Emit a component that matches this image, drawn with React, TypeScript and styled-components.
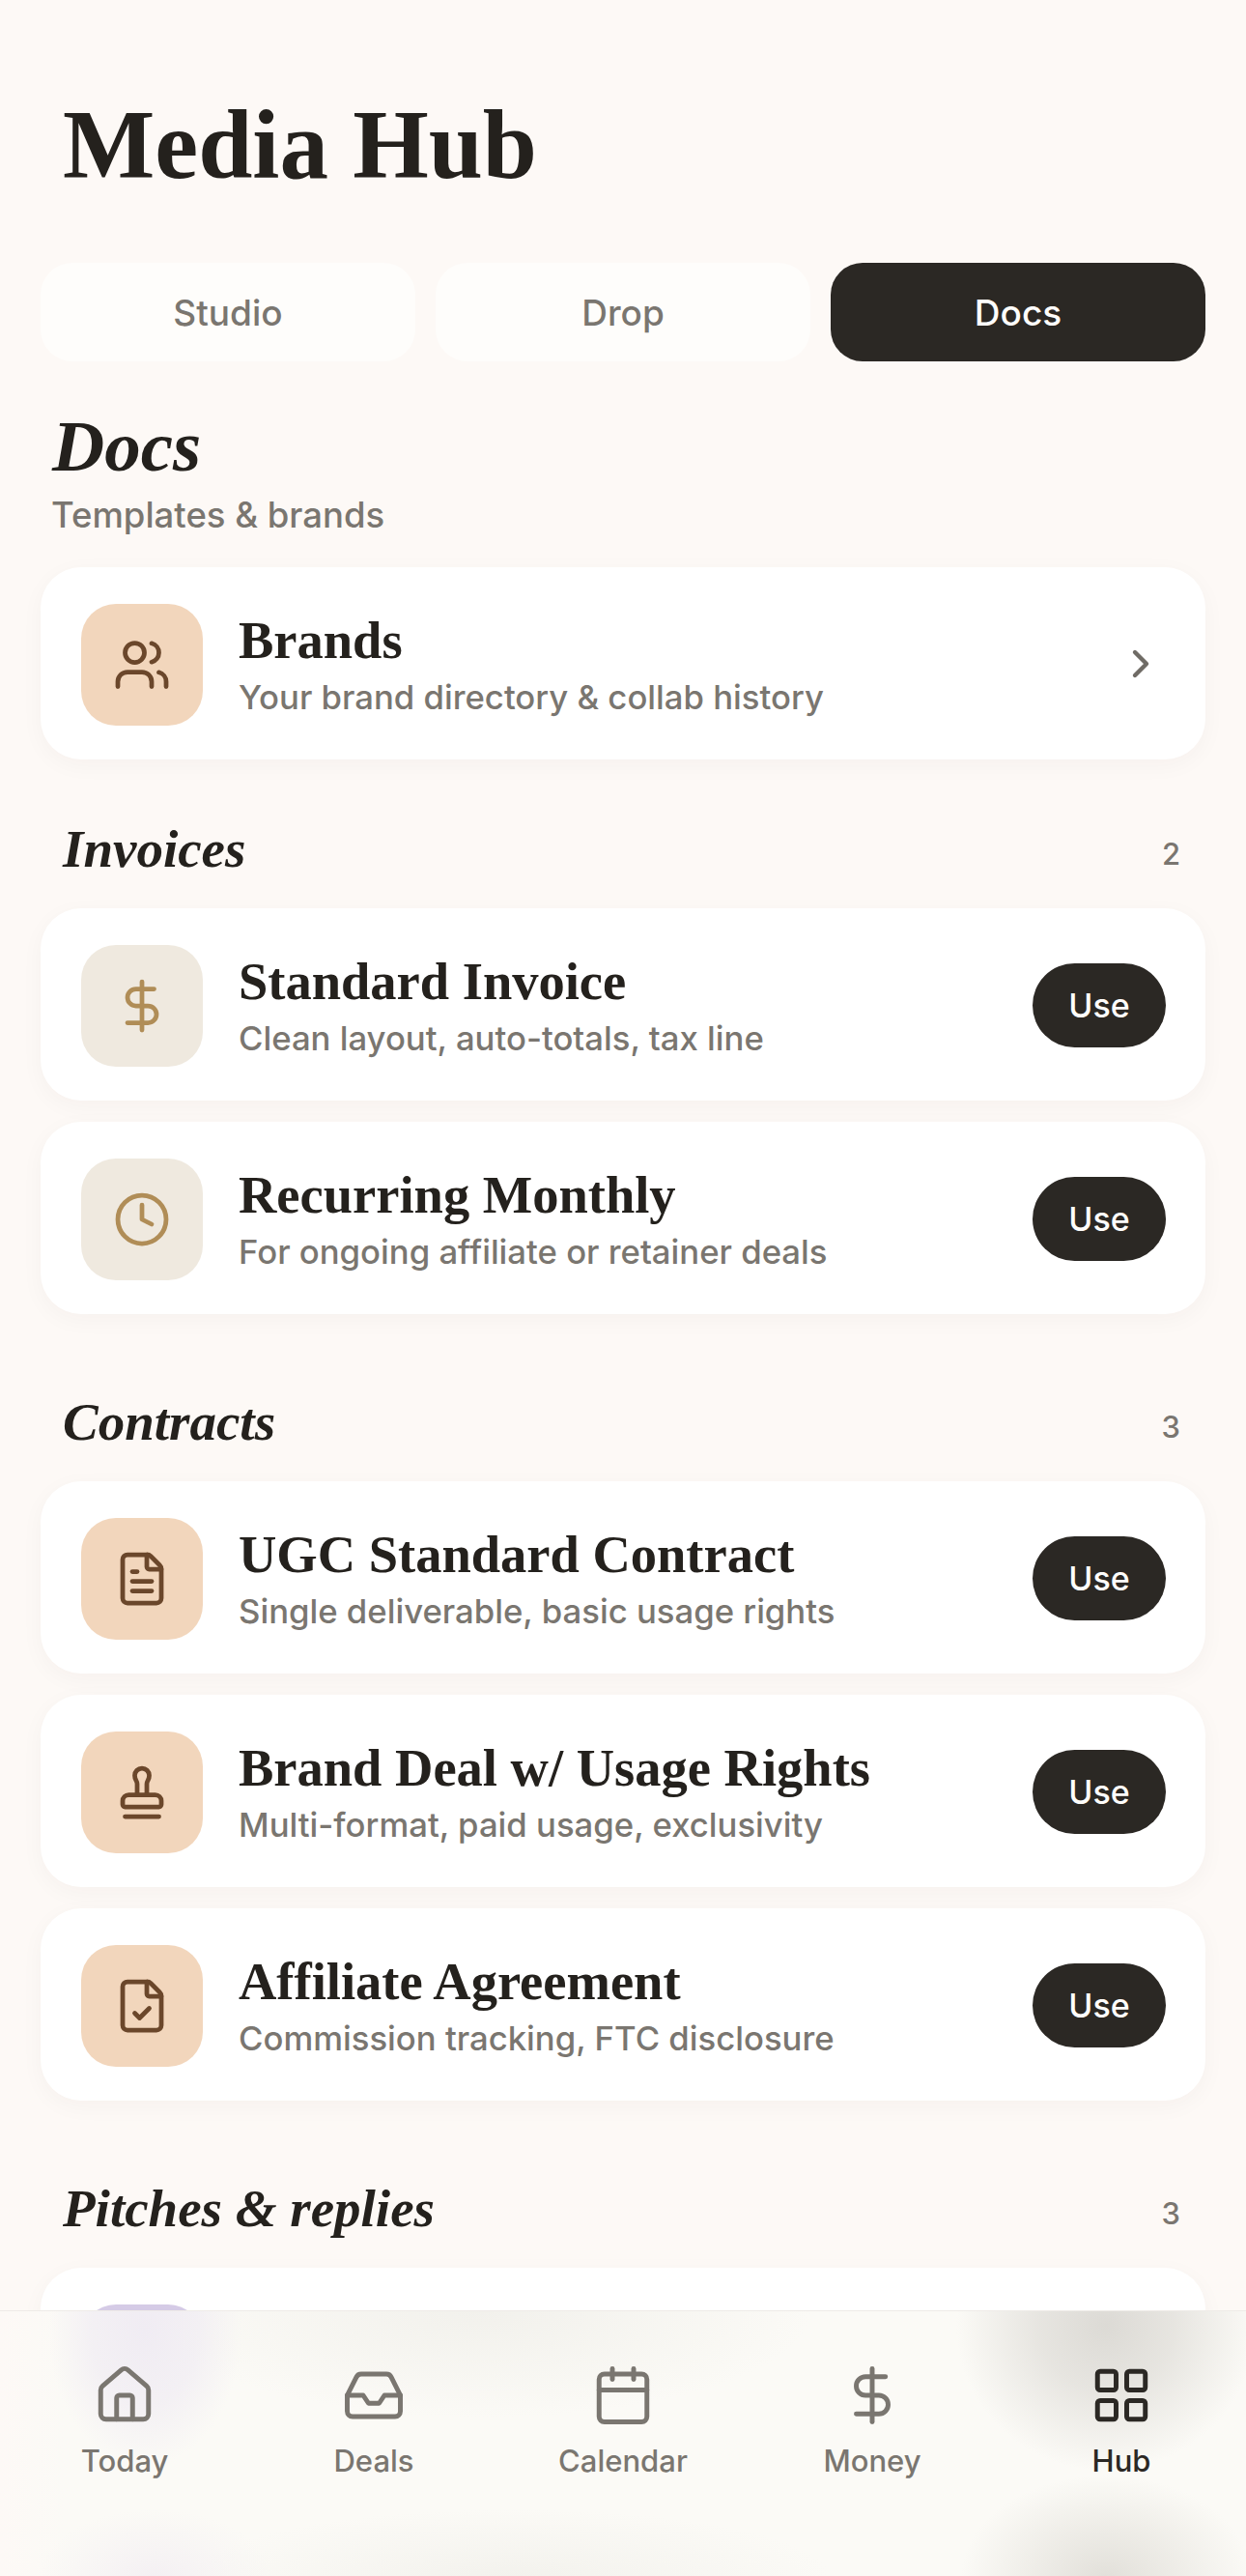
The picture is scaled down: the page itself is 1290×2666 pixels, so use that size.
import React from "react";
import styled, { createGlobalStyle } from "styled-components";
import {
  Calendar,
  ChevronRight,
  Clock,
  DollarSign,
  FileCheck,
  FileText,
  House,
  Inbox,
  LayoutGrid,
  LucideIcon,
  Stamp,
  Users,
} from "lucide-react";

const SERIF = `"Liberation Serif", "DejaVu Serif", serif`;
const SANS = `Inter, "Noto Sans", sans-serif`;

const GlobalStyle = createGlobalStyle`
  html, body {
    margin: 0;
    padding: 0;
    height: 2666px;
    overflow: hidden;
    background: #fdf9f6;
  }
  * {
    box-sizing: border-box;
  }
`;

const Screen = styled.div`
  position: relative;
  width: 1290px;
  height: 2666px;
  overflow: hidden;
  background: #fdf9f6;
  font-family: ${SANS};
  color: #24211d;
`;

const Content = styled.main`
  padding: 92px 42px 0;
`;

const PageTitle = styled.h1`
  margin: 0 0 0 23px;
  height: 116px;
  font-family: ${SERIF};
  font-size: 101px;
  line-height: 116px;
  font-weight: 700;
`;

const Tabs = styled.div`
  display: grid;
  grid-template-columns: repeat(3, 1fr);
  gap: 21px;
  margin-top: 64px;
`;

const Tab = styled.button<{ $active?: boolean }>`
  height: 102px;
  border: 0;
  border-radius: 33px;
  padding: 0;
  background: ${(p) => (p.$active ? "#2b2824" : "#fefdfb")};
  color: ${(p) => (p.$active ? "#fefdfb" : "#7a7670")};
  font-family: ${SANS};
  font-size: 37px;
  font-weight: 500;
`;

const PanelTitle = styled.h2`
  margin: 52px 0 0 12px;
  height: 72px;
  font-family: ${SERIF};
  font-style: italic;
  font-size: 75px;
  line-height: 72px;
  font-weight: 700;
`;

const PanelSubtitle = styled.div`
  margin: 15px 0 0 11px;
  height: 40px;
  font-size: 36.5px;
  line-height: 40px;
  font-weight: 500;
  color: #7a7670;
`;

const CardList = styled.div`
  display: flex;
  flex-direction: column;
  gap: 22px;
`;

const BrandsList = styled(CardList)`
  margin-top: 34px;
`;

const Card = styled.div`
  display: flex;
  align-items: center;
  height: 199px;
  padding: 0 41px 0 42px;
  border-radius: 42px;
  background: #fff;
  box-shadow: 0 6px 24px rgba(60, 40, 20, 0.035);
`;

const IconBox = styled.div<{ $bg: string; $fg: string }>`
  display: flex;
  flex: none;
  align-items: center;
  justify-content: center;
  width: 126px;
  height: 126px;
  margin-top: 2px;
  border-radius: 36px;
  background: ${(p) => p.$bg};
  color: ${(p) => p.$fg};
`;

const CardText = styled.div`
  flex: 1;
  min-width: 0;
  margin-left: 37px;
`;

const CardTitle = styled.div`
  font-family: ${SERIF};
  font-size: 54.5px;
  line-height: 60px;
  font-weight: 700;
  color: #24211d;
`;

const CardDesc = styled.div`
  margin-top: 8px;
  font-size: 34.7px;
  line-height: 40px;
  font-weight: 500;
  color: #7a7670;
`;

const UseButton = styled.button`
  flex: none;
  width: 138px;
  height: 87px;
  margin-top: 1px;
  border: 0;
  border-radius: 44px;
  padding: 0;
  background: #2b2824;
  color: #fefdfb;
  font-family: ${SANS};
  font-size: 34px;
  font-weight: 500;
`;

const Chevron = styled(ChevronRight)`
  flex: none;
  margin-right: 2px;
  color: #6f6b65;
`;

const SectionHeader = styled.div<{ $first?: boolean }>`
  display: flex;
  align-items: flex-end;
  justify-content: space-between;
  height: 62px;
  margin: ${(p) => (p.$first ? "62px" : "81px")} 0 30px;
  padding: 0 26px 0 23px;
`;

const SectionTitle = styled.h3`
  margin: 0;
  font-family: ${SERIF};
  font-style: italic;
  font-size: 55px;
  line-height: 62px;
  font-weight: 700;
`;

const SectionCount = styled.span`
  margin-bottom: 3px;
  font-size: 31px;
  line-height: 46px;
  font-weight: 500;
  color: #7a7670;
`;

/* backdrop-filter does not paint in the capture, so the blurred page behind the bar is baked in */
const BottomNav = styled.nav`
  position: absolute;
  left: 0;
  right: 0;
  bottom: 0;
  display: grid;
  grid-template-columns: repeat(5, 1fr);
  align-content: start;
  height: 275px;
  padding-top: 54px;
  border-top: 1px solid #eeebe7;
  background-color: #fbfaf6;
  background-image:
    radial-gradient(ellipse 155px 150px at 1145px 15px, #dcdad5 0%, rgba(224, 222, 217, 0.75) 45%, rgba(251, 250, 246, 0) 100%),
    radial-gradient(ellipse 150px 105px at 1145px 275px, #e2e0da 0%, rgba(230, 228, 222, 0.6) 50%, rgba(251, 250, 246, 0) 100%),
    radial-gradient(ellipse 100px 140px at 150px 20px, #f0ecf3 0%, rgba(240, 236, 243, 0.7) 55%, rgba(251, 250, 246, 0) 100%),
    radial-gradient(ellipse 120px 70px at 160px 275px, #f4f0f3 0%, rgba(251, 250, 246, 0) 100%),
    radial-gradient(ellipse 340px 110px at 500px 0, #f2f1ec 0%, rgba(251, 250, 246, 0) 100%),
    radial-gradient(ellipse 330px 70px at 530px 275px, #f3f2ed 0%, rgba(251, 250, 246, 0) 100%),
    linear-gradient(90deg, #fdf9f6 0, rgba(253, 249, 246, 0) 70px);
`;

const NavItem = styled.div<{ $active?: boolean }>`
  display: flex;
  flex-direction: column;
  align-items: center;
  gap: 16px;
  color: ${(p) => (p.$active ? "#2b2824" : "#7a7670")};
`;

const NavLabel = styled.span`
  font-size: 31px;
  line-height: 38px;
  font-weight: 500;
`;

type Doc = { title: string; desc: string; icon: LucideIcon };

const PEACH = { bg: "#f2d6bc", fg: "#6b472b" };
const SAND = { bg: "#efe9df", fg: "#b08d57" };
const LILAC = { bg: "#d5cbe6", fg: "#5b4a7a" };

const sections: { name: string; count: number; tone: typeof PEACH; docs: Doc[] }[] = [
  {
    name: "Invoices",
    count: 2,
    tone: SAND,
    docs: [
      { title: "Standard Invoice", desc: "Clean layout, auto-totals, tax line", icon: DollarSign },
      { title: "Recurring Monthly", desc: "For ongoing affiliate or retainer deals", icon: Clock },
    ],
  },
  {
    name: "Contracts",
    count: 3,
    tone: PEACH,
    docs: [
      { title: "UGC Standard Contract", desc: "Single deliverable, basic usage rights", icon: FileText },
      { title: "Brand Deal w/ Usage Rights", desc: "Multi-format, paid usage, exclusivity", icon: Stamp },
      { title: "Affiliate Agreement", desc: "Commission tracking, FTC disclosure", icon: FileCheck },
    ],
  },
];

const navItems: { label: string; icon: LucideIcon; active?: boolean }[] = [
  { label: "Today", icon: House },
  { label: "Deals", icon: Inbox },
  { label: "Calendar", icon: Calendar },
  { label: "Money", icon: DollarSign },
  { label: "Hub", icon: LayoutGrid, active: true },
];

const App = (): JSX.Element => {
  return (
    <Screen>
      <GlobalStyle />
      <Content>
        <PageTitle>Media Hub</PageTitle>
        <Tabs>
          <Tab>Studio</Tab>
          <Tab>Drop</Tab>
          <Tab $active>Docs</Tab>
        </Tabs>
        <PanelTitle>Docs</PanelTitle>
        <PanelSubtitle>Templates &amp; brands</PanelSubtitle>
        <BrandsList>
          <Card>
            <IconBox $bg={PEACH.bg} $fg={PEACH.fg}>
              <Users size={60} strokeWidth={1.9} />
            </IconBox>
            <CardText>
              <CardTitle>Brands</CardTitle>
              <CardDesc>Your brand directory &amp; collab history</CardDesc>
            </CardText>
            <Chevron size={48} strokeWidth={2.2} />
          </Card>
        </BrandsList>
        {sections.map((section, i) => (
          <React.Fragment key={section.name}>
            <SectionHeader $first={i === 0}>
              <SectionTitle>{section.name}</SectionTitle>
              <SectionCount>{section.count}</SectionCount>
            </SectionHeader>
            <CardList>
              {section.docs.map((doc) => (
                <Card key={doc.title}>
                  <IconBox $bg={section.tone.bg} $fg={section.tone.fg}>
                    <doc.icon size={60} strokeWidth={1.9} />
                  </IconBox>
                  <CardText>
                    <CardTitle>{doc.title}</CardTitle>
                    <CardDesc>{doc.desc}</CardDesc>
                  </CardText>
                  <UseButton>Use</UseButton>
                </Card>
              ))}
            </CardList>
          </React.Fragment>
        ))}
        <SectionHeader>
          <SectionTitle>Pitches &amp; replies</SectionTitle>
          <SectionCount>3</SectionCount>
        </SectionHeader>
        <Card>
          <IconBox $bg={LILAC.bg} $fg={LILAC.fg} />
        </Card>
      </Content>
      <BottomNav>
        {navItems.map((item) => (
          <NavItem key={item.label} $active={item.active}>
            <item.icon size={66} strokeWidth={1.8} />
            <NavLabel>{item.label}</NavLabel>
          </NavItem>
        ))}
      </BottomNav>
    </Screen>
  );
};

export default App;
